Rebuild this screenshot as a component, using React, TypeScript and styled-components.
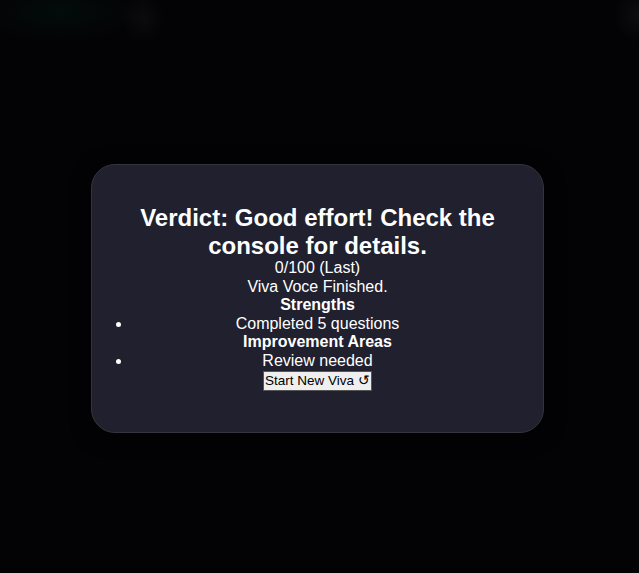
import styled, { createGlobalStyle } from 'styled-components';

const GlobalStyle = createGlobalStyle`
  html, body {
    margin: 0;
    padding: 0;
    height: 100%;
  }
  body {
    background:
      radial-gradient(ellipse 110px 40px at 60px 12px, rgba(0, 40, 34, 0.22), transparent 75%),
      radial-gradient(ellipse 28px 34px at 143px 18px, rgba(40, 40, 40, 0.22), transparent 75%),
      radial-gradient(ellipse 34px 36px at 639px 15px, rgba(45, 45, 45, 0.25), transparent 75%),
      #030305;
    font-family: 'Liberation Sans', Arial, sans-serif;
    color: #ffffff;
  }
  #root {
    min-height: 100%;
  }
`;

const Page = styled.div`
  min-height: 573px;
  display: flex;
  align-items: center;
  justify-content: center;
  padding: 24px 4px 0 0;
  box-sizing: border-box;
`;

const Card = styled.div`
  width: 453px;
  box-sizing: border-box;
  padding: 39px 40px 41px;
  background: #20202f;
  border: 1px solid #34343f;
  border-radius: 24px;
  text-align: center;
  box-shadow: 0 4px 20px rgba(0, 0, 0, 0.5);
`;

const Verdict = styled.h2`
  margin: 0;
  font-size: 24px;
  font-weight: 700;
  line-height: 27.6px;
`;

const Line = styled.div<{ $bold?: boolean }>`
  font-size: 16px;
  line-height: 18.5px;
  font-weight: ${({ $bold }) => ($bold ? 700 : 400)};
`;

const List = styled.ul`
  margin: 0;
  padding: 0;
  list-style: disc outside;
`;

const Item = styled.li`
  font-size: 16px;
  line-height: 18.5px;
`;

const RestartButton = styled.button`
  margin-top: 1px;
  font-family: 'Liberation Sans', Arial, sans-serif;
  font-size: 13.5px;
  line-height: 16px;
  padding: 1px 1px;
  background: #efefef;
  color: #000;
  border: 1px solid #555;
  border-radius: 0;
  cursor: pointer;
`;

const App = () => {
  return (
    <>
      <GlobalStyle />
      <Page>
        <Card>
          <Verdict>Verdict: Good effort! Check the console for details.</Verdict>
          <Line>0/100 (Last)</Line>
          <Line>Viva Voce Finished.</Line>
          <Line $bold>Strengths</Line>
          <List>
            <Item>Completed 5 questions</Item>
          </List>
          <Line $bold>Improvement Areas</Line>
          <List>
            <Item>Review needed</Item>
          </List>
          <RestartButton>Start New Viva ↺</RestartButton>
        </Card>
      </Page>
    </>
  );
};

export default App;
